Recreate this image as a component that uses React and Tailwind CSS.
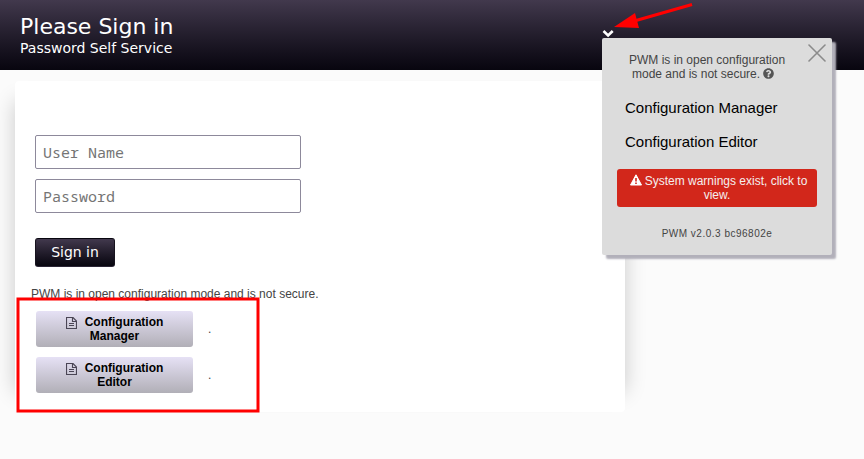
import React from "react";
import { FaQuestionCircle } from "react-icons/fa";

function FileIcon() {
  return (
    <svg className="mt-[2px] h-3 w-[11px] shrink-0" viewBox="0 0 11 12" fill="none" stroke="#4a4555" strokeWidth="1.15">
      <path d="M0.5 0.5H7L10.5 4V11.5H0.5ZM6.5 0.5V4.5H10.5M3 6.5H8M3 8.5H8" />
    </svg>
  );
}

function WarningIcon() {
  return (
    <svg className="h-3 w-3 shrink-0" viewBox="0 0 12 12">
      <path d="M6 0.8L11.5 11H0.5Z" fill="#fff" stroke="#fff" strokeLinejoin="round" />
      <path d="M6 4V7.4M6 8.4V10" stroke="#d2271b" strokeWidth="1.6" />
    </svg>
  );
}

function ConfigRow({ label }) {
  return (
    <div className="flex items-center">
      <button className="h-9 w-[157px] rounded-[3px] bg-linear-to-b from-[#e6e1f5] to-[#b1afb7] pb-[1px] text-[12px] leading-[14px] font-bold text-black">
        <span className="flex justify-center gap-[8px]">
          <FileIcon />
          <span>Configuration</span>
        </span>
        <span className="block">{label}</span>
      </button>
      <span className="ml-[15px] text-[12px] leading-[14px] text-[#444]">.</span>
    </div>
  );
}

function Field({ placeholder, type }) {
  return (
    <input
      type={type}
      placeholder={placeholder}
      className="block h-[34px] w-[266px] rounded-[2px] border border-[#8d899b] bg-white px-[7px] font-['Noto_Sans_Mono','Noto_Mono','DejaVu_Sans_Mono',monospace] text-[15px] placeholder:text-[#757575]"
    />
  );
}

function AdminMenu() {
  return (
    <aside className="absolute top-[38px] left-[602px] h-[217px] w-[230px] rounded-[2px] bg-[#dcdcdc] px-[15px] pt-[15px] text-[#444] shadow-[4px_4px_2px_#b2b0ba]">
      <button className="absolute top-[6px] right-[6px]" aria-label="Close">
        <svg className="h-[18px] w-[18px]" viewBox="0 0 18 18" stroke="#8b8b8b" strokeWidth="1.6" strokeLinecap="round">
          <path d="M1 1L17 17M17 1L1 17" />
        </svg>
      </button>
      <div className="pl-[10px] text-[12px] leading-[14px]">
        <p className="pl-[2px]">PWM is in open configuration</p>
        <p className="flex items-center gap-[3px] pl-[5px]">
          mode and is not secure. <FaQuestionCircle className="-mt-[1px] h-[11px] w-[11px] text-[#555]" />
        </p>
      </div>
      <nav className="mt-[18px] flex flex-col gap-4 pl-2 text-[15px] leading-[18px] text-black">
        <a>Configuration Manager</a>
        <a>Configuration Editor</a>
      </nav>
      <div className="mt-[18px] h-[38px] rounded-[3px] bg-[#d2271b] pt-[5px] text-center text-[12px] leading-[14px] text-[#f4efef]">
        <p className="flex justify-center gap-[3px] pl-[3px]">
          <WarningIcon />
          System warnings exist, click to
        </p>
        <p>view.</p>
      </div>
      <p className="mt-[21px] text-center text-[10px] leading-[12px] tracking-[0.5px]">PWM v2.0.3 bc96802e</p>
    </aside>
  );
}

export default function App() {
  return (
    <div className="relative h-[459px] w-[864px] overflow-hidden bg-[#fbfbfb] font-['Liberation_Sans',Arial,sans-serif]">
      <header className="h-[70px] bg-linear-to-b from-[#42394d] to-[#08060f] pt-[14px] pl-5 font-['DejaVu_Sans',sans-serif] text-white">
        <h1 className="text-[22px] leading-[26px]">Please Sign in</h1>
        <p className="text-[14px] leading-4">Password Self Service</p>
      </header>
      <main className="mt-[11px] ml-[15px] h-[331px] w-[610px] rounded-[4px] bg-white pt-[54px] shadow-[-20px_0_20px_-20px_rgba(0,0,0,0.2),20px_0_20px_-20px_rgba(0,0,0,0.2)]">
        <form className="flex flex-col items-start gap-[10px] pl-5">
          <Field type="text" placeholder="User Name" />
          <Field type="password" placeholder="Password" />
          <button
            type="button"
            className="mt-[15px] h-[29px] w-20 rounded-[3px] border border-t-[#08060f] border-x-[#17131e] border-b-[#2a2435] bg-linear-to-b from-[#42394d] to-[#08060f] font-['DejaVu_Sans',sans-serif] text-[14px] text-white"
          >
            Sign in
          </button>
        </form>
        <p className="mt-5 pl-4 text-[12px] leading-[14px] text-[#444]">PWM is in open configuration mode and is not secure.</p>
        <div className="mt-[10px] flex flex-col gap-[10px] pl-[20px]">
          <div className="flex flex-col gap-[10px] pl-[1px]">
            <ConfigRow label="Manager" />
            <ConfigRow label="Editor" />
          </div>
        </div>
      </main>
      <svg className="absolute top-[28px] left-[602px] h-3 w-3" viewBox="0 0 12 12" fill="none" stroke="#fff" strokeWidth="2.6">
        <path d="M1.5 3L6.1 7.5L10.7 3" />
      </svg>
      <AdminMenu />
      <svg className="pointer-events-none absolute inset-0 h-[459px] w-[864px]" viewBox="0 0 864 459">
        <rect x="18" y="299" width="240" height="112" fill="none" stroke="#ff0000" strokeWidth="3" />
        <path d="M692 4.5L636 20.5" stroke="#ff0000" strokeWidth="3.2" />
        <path d="M614 27L635 13L639 28Z" fill="#ff0000" />
      </svg>
    </div>
  );
}
